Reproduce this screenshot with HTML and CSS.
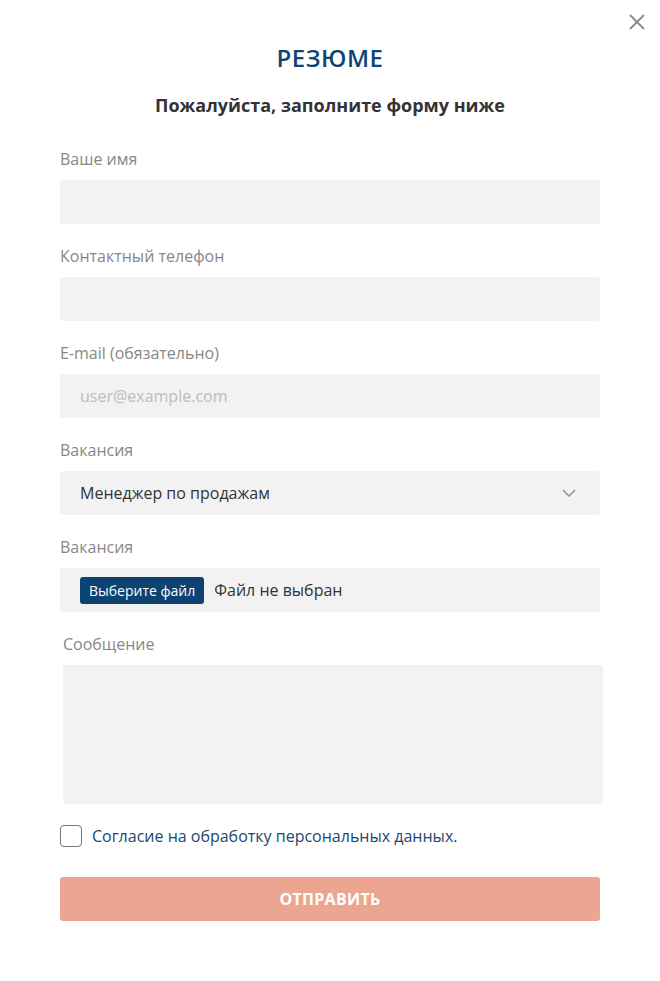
FILE: index.html
```html
<!DOCTYPE html>
<html lang="ru">
<head>
<meta charset="utf-8">
<link rel="stylesheet" href="styles.css">
</head>
<body>
<div class="modal">
  <button class="close" aria-label="Закрыть">
    <svg width="16" height="16" viewBox="0 0 16 16"><path d="M1 1L15 15M15 1L1 15" stroke="#8a8a8a" stroke-width="1.8" fill="none"/></svg>
  </button>
  <h1 class="title">РЕЗЮМЕ</h1>
  <p class="subtitle">Пожалуйста, заполните форму ниже</p>
  <form class="form">
    <div class="field">
      <label class="label">Ваше имя</label>
      <div class="input"></div>
    </div>
    <div class="field">
      <label class="label">Контактный телефон</label>
      <div class="input"></div>
    </div>
    <div class="field">
      <label class="label">E-mail (обязательно)</label>
      <div class="input"><span class="placeholder">user@example.com</span></div>
    </div>
    <div class="field">
      <label class="label">Вакансия</label>
      <div class="input select"><span class="value">Менеджер по продажам</span>
        <svg class="chevron" width="14" height="8" viewBox="0 0 14 8"><path d="M1 1L7 7L13 1" stroke="#8a8a8a" stroke-width="1.3" fill="none"/></svg>
      </div>
    </div>
    <div class="field">
      <label class="label">Вакансия</label>
      <div class="input file"><span class="file-btn">Выберите файл</span><span class="value">Файл не выбран</span></div>
    </div>
    <div class="field shifted">
      <label class="label">Сообщение</label>
      <div class="textarea"></div>
    </div>
    <div class="agree">
      <span class="checkbox"></span>
      <span class="agree-text">Согласие на обработку персональных данных.</span>
    </div>
    <button type="button" class="submit">ОТПРАВИТЬ</button>
  </form>
</div>
</body>
</html>
```

FILE: styles.css
```css
* { box-sizing: border-box; }
html, body { margin: 0; padding: 0; background: #fff; }
body { font-family: "Open Sans", "Liberation Sans", sans-serif; color: #333; }

.modal {
  position: relative;
  width: 660px;
  min-height: 981px;
  padding: 38px 60px 0 60px;
}
.close {
  position: absolute;
  top: 14px;
  right: 15px;
  border: 0;
  background: none;
  padding: 0;
  width: 16px;
  height: 16px;
  cursor: pointer;
}
.close svg { display: block; }

.title {
  margin: 0;
  text-align: center;
  font-size: 24px;
  line-height: 40px;
  font-weight: 600;
  color: #0f4576;
  letter-spacing: 0.5px;
}
.subtitle {
  margin: 15px 0 0 0;
  text-align: center;
  font-size: 18px;
  line-height: 24px;
  font-weight: 700;
  color: #333;
}
.form { margin-top: 31px; display: flex; flex-direction: column; }

.field { display: flex; flex-direction: column; margin-bottom: 21px; }
.label {
  font-size: 16px;
  line-height: 22px;
  color: #878787;
  margin-bottom: 10px;
}
.input {
  height: 44px;
  background: #f2f2f2;
  border-radius: 3px;
  display: flex;
  align-items: center;
  padding: 0 20px;
  font-size: 16px;
}
.placeholder { color: #bcbcbc; }
.value { color: #333; }
.select { justify-content: space-between; }
.chevron { margin-right: 4px; }
.file { gap: 10px; }
.file-btn {
  background: #0d4271;
  color: #fff;
  font-size: 14px;
  line-height: 27px;
  padding: 0 9px;
  border-radius: 3px;
}
.shifted { margin-left: 3px; margin-right: -3px; }
.textarea {
  height: 139px;
  background: #f2f2f2;
  border-radius: 3px;
}

.agree {
  display: flex;
  align-items: center;
  gap: 10px;
  margin-top: 0;
}
.checkbox {
  width: 22px;
  height: 22px;
  border: 1px solid #777;
  border-radius: 4px;
  background: #fff;
}
.agree-text {
  font-size: 16px;
  line-height: 22px;
  color: #1a4872;
}
.submit {
  margin-top: 30px;
  height: 44px;
  border: 0;
  border-radius: 3px;
  background: #eba590;
  color: #fff;
  font-family: "Open Sans", "Liberation Sans", sans-serif;
  font-weight: 700;
  font-size: 16px;
  letter-spacing: 0.3px;
  cursor: pointer;
}
```
